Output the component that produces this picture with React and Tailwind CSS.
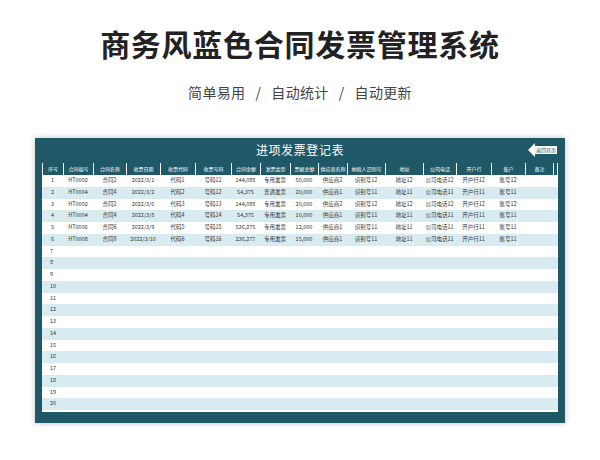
const cols = [
  ["序号", 21], ["合同编号", 30], ["合同名称", 33], ["收票日期", 34], ["收票代码", 35], ["收票号码", 36],
  ["合同金额", 29], ["发票类型", 30], ["票据金额", 28], ["供应商名称", 29], ["纳税人识别号", 38],
  ["地址", 38], ["公司电话", 33], ["开户行", 35], ["账户", 34], ["备注", 28],
];

const data = [
  ["1", "HT0002", "合同2", "2022/3/1", "代码1", "号码11", "144,088", "专用发票", "50,000", "供应商2", "识别号12", "地址12", "公司电话12", "开户行12", "账号12", ""],
  ["2", "HT0004", "合同4", "2022/3/2", "代码2", "号码12", "54,375", "普通发票", "20,000", "供应商1", "识别号11", "地址11", "公司电话11", "开户行11", "账号11", ""],
  ["3", "HT0002", "合同2", "2022/3/6", "代码3", "号码13", "144,088", "专用发票", "20,000", "供应商2", "识别号12", "地址12", "公司电话12", "开户行12", "账号12", ""],
  ["4", "HT0004", "合同4", "2022/3/8", "代码4", "号码14", "54,375", "专用发票", "10,000", "供应商1", "识别号11", "地址11", "公司电话11", "开户行11", "账号11", ""],
  ["5", "HT0006", "合同6", "2022/3/9", "代码5", "号码15", "536,275", "专用发票", "12,000", "供应商1", "识别号11", "地址11", "公司电话11", "开户行11", "账号11", ""],
  ["6", "HT0008", "合同8", "2022/3/10", "代码6", "号码16", "236,277", "专用发票", "15,000", "供应商1", "识别号11", "地址11", "公司电话11", "开户行11", "账号11", ""],
];

const font = { fontFamily: '"Noto Sans CJK SC", "Noto Sans", sans-serif' };

export default function App() {
  const rows = Array.from({ length: 20 }, (_, i) => data[i] || [String(i + 1)]);
  return (
    <div className="w-[600px] h-[460px] bg-white flex flex-col items-center" style={font}>
      <h1 className="mt-[23px] text-[30px] leading-[40px] font-bold text-[#222] tracking-wide">商务风蓝色合同发票管理系统</h1>
      <div className="mt-[19px] text-[14px] leading-[20px] text-[#444] tracking-wide flex gap-[10px]">
        <span>简单易用</span><span>/</span><span>自动统计</span><span>/</span><span>自动更新</span>
      </div>
      <div className="mt-[36px] w-[530px] h-[285px] bg-[#1f5866] shadow-[0_0_6px_rgba(0,0,0,0.25)] flex flex-col">
        <div className="h-[24px] relative flex items-center justify-center">
          <span className="text-white text-[12px] tracking-wider">进项发票登记表</span>
          <div className="absolute right-[8px] top-[5px] flex items-center">
            <div className="w-0 h-0 border-y-[7px] border-y-transparent border-r-[7px] border-r-white" />
            <div className="bg-white h-[8px] w-[22px] text-[5px] leading-[8px] text-[#1f5866] text-center">返回首页</div>
          </div>
        </div>
        <div className="mx-[7px] mt-[1px] h-[249px] bg-white flex flex-col">
          <div className="flex h-[12px] bg-[#1f5866] border-x border-white">
            {cols.map(([c, w], i) => (
              <div key={i} style={{ width: w }} className="shrink-0 border-r border-white text-white text-[5px] leading-[12px] text-center overflow-hidden whitespace-nowrap">{c}</div>
            ))}
          </div>
          {rows.map((r, i) => (
            <div key={i} className={`flex h-[11.75px] ${i % 2 ? "bg-[#d8ebf1]" : "bg-white"}`}>
              {cols.map(([, w], j) => (
                <div key={j} style={{ width: w }} className={`shrink-0 text-[5.5px] leading-[11.75px] text-[#333] whitespace-nowrap overflow-hidden ${data[i] ? "text-center" : "pl-[8px]"}`}>{r[j] || ""}</div>
              ))}
            </div>
          ))}
        </div>
      </div>
    </div>
  );
}
